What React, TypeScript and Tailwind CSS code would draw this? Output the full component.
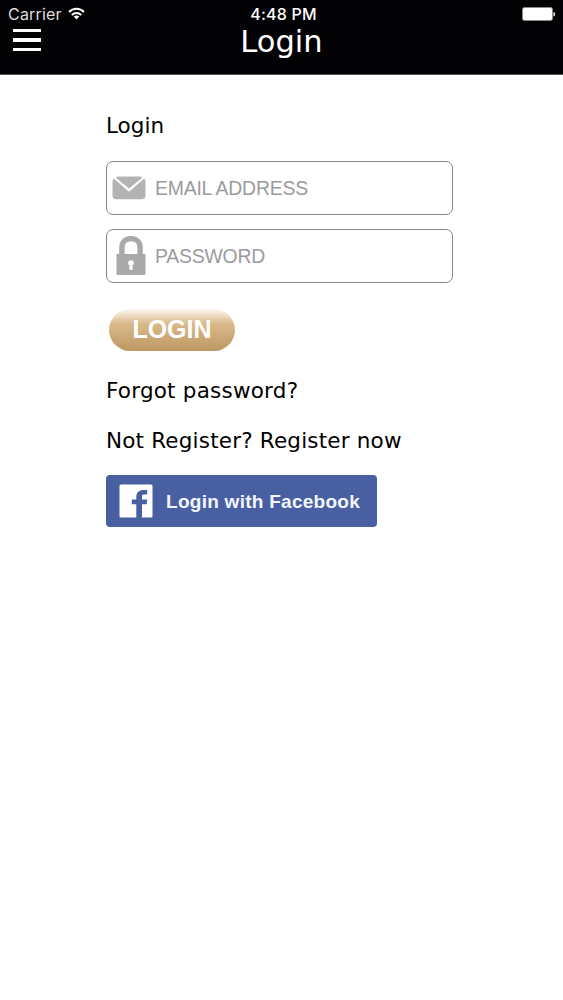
import type { ReactNode } from 'react';

function WifiIcon() {
  return (
    <svg width="17" height="13" viewBox="0 0 17 13" fill="none" stroke="#fff" strokeWidth="1.9">
      <path d="M1 5C5 0.7 12 0.7 16 5" />
      <path d="M3.8 8C6.5 5.3 10.5 5.3 13.2 8" />
      <path d="M8.5 12.4L5.7 9.6C7.3 8.2 9.7 8.2 11.3 9.6Z" fill="#fff" stroke="none" />
    </svg>
  );
}

function BatteryIcon() {
  return (
    <svg width="34" height="14" viewBox="0 0 34 14">
      <rect x="0.5" y="0.5" width="30" height="13" rx="2" fill="#fff" stroke="#8a8a8a" />
      <path d="M31.5 5C33.6 5 33.6 9.4 31.5 9.4Z" fill="#fff" />
    </svg>
  );
}

function MailIcon() {
  return (
    <svg width="34" height="24" viewBox="0 0 34 24" fill="#b3b3b6">
      <path d="M5 0.5H29L30 2L17 12.5L4 2Z" />
      <path d="M1.8 2.6L17 15.8L32.2 2.6Q33.5 3.8 33.5 6V19.5Q33.5 23.2 29.8 23.2H4.2Q0.5 23.2 0.5 19.5V6Q0.5 3.8 1.8 2.6Z" />
    </svg>
  );
}

function LockIcon() {
  return (
    <svg width="30" height="39" viewBox="0 0 30 39">
      <path d="M5.9 19V11.5C5.9 -0.3 24.1 -0.3 24.1 11.5V19" fill="none" stroke="#a9a9ac" strokeWidth="5.4" />
      <path d="M0.5 18H29.5V37.5Q29.5 39 28 39H2Q0.5 39 0.5 37.5Z" fill="#a9a9ac" />
      <circle cx="15" cy="27" r="2.8" fill="#fff" />
      <path d="M13.7 28H16.3L16.8 33.8H13.2Z" fill="#fff" />
    </svg>
  );
}

function FacebookIcon() {
  return (
    <svg width="34" height="34" viewBox="0 0 34 34">
      <rect x="0.5" y="0.5" width="33" height="33" rx="1.5" fill="#fff" />
      <path
        d="M17.3 34V20.3H12.8V15.4H17.3V12.8C17.3 8 20.4 5.9 24.6 5.9H28.2V10.6H25.6C23.5 10.6 23 11.2 23 13V15.4H28.2L27.6 20.3H23V34Z"
        fill="#4860a2"
      />
    </svg>
  );
}

function Field({ icon, type, placeholder }: { icon: ReactNode; type: string; placeholder: string }) {
  return (
    <label className="flex h-[54px] w-[347px] items-center rounded-[7px] border border-[#858589] bg-white">
      <span className="flex w-12 shrink-0 justify-center pr-1">{icon}</span>
      <input
        type={type}
        placeholder={placeholder}
        className="w-[280px] pt-px font-['Liberation_Sans',sans-serif] text-[19.4px] tracking-[-0.2px] outline-none placeholder:text-[#9b9b9e]"
      />
    </label>
  );
}

export default function App() {
  return (
    <div className="min-h-[1000px] bg-white font-['DejaVu_Sans',sans-serif] text-black">
      <header className="h-[75px] border-b border-[#555] bg-[#020104] text-white">
        <div className="grid h-7 grid-cols-3 items-center pr-[7px] pl-2 font-['Inter',sans-serif] text-base">
          <div className="flex items-center gap-[6px]">
            <span className="tracking-[0.2px] text-[#dedede]">Carrier</span>
            <span className="pb-[2px]">
              <WifiIcon />
            </span>
          </div>
          <div className="pl-[3px] text-center font-medium tracking-[0.2px] whitespace-nowrap">4:48 PM</div>
          <div className="flex justify-end">
            <BatteryIcon />
          </div>
        </div>
        <div className="grid h-[26px] grid-cols-[60px_1fr_60px]">
          <button aria-label="Menu" className="ml-[13px] flex w-7 flex-col gap-[6px] pt-[0.5px]">
            <span className="h-[3.5px] w-full bg-white" />
            <span className="h-[3.5px] w-full bg-white" />
            <span className="h-[3.5px] w-full bg-white" />
          </button>
          <h1 className="text-center text-[30.5px] leading-7">Login</h1>
        </div>
      </header>

      <main className="flex flex-col items-start pl-[106px] text-[21.5px]">
        <h2 className="mt-[37px] leading-7">Login</h2>
        <form className="mt-[21px] flex flex-col items-start gap-[14px]">
          <Field icon={<MailIcon />} type="email" placeholder="EMAIL ADDRESS" />
          <Field
            icon={
              <span className="pb-[2px] pl-1">
                <LockIcon />
              </span>
            }
            type="password"
            placeholder="PASSWORD"
          />
          <button
            type="button"
            className="mt-3 ml-[3px] h-[42px] w-[126px] rounded-full bg-linear-to-b from-[#fdf9f2] via-[#dab98a] via-35% to-[#bd9863] pb-[3px] font-['Liberation_Sans',sans-serif] text-[25px] leading-[38px] font-bold text-white"
          >
            LOGIN
          </button>
        </form>
        <a className="mt-[26px] leading-7 tracking-[0.22px]">Forgot password?</a>
        <a className="mt-[22px] leading-7 tracking-[0.18px]">Not Register? Register now</a>
        <button className="mt-5 flex h-[52px] w-[271px] items-center rounded-[4px] bg-[#4860a2] pl-[13px] font-['Liberation_Sans',sans-serif] text-[19px] font-bold text-[#f4f6ff]">
          <FacebookIcon />
          <span className="ml-[13px] pt-[2px] tracking-[0.27px]">Login with Facebook</span>
        </button>
      </main>
    </div>
  );
}
